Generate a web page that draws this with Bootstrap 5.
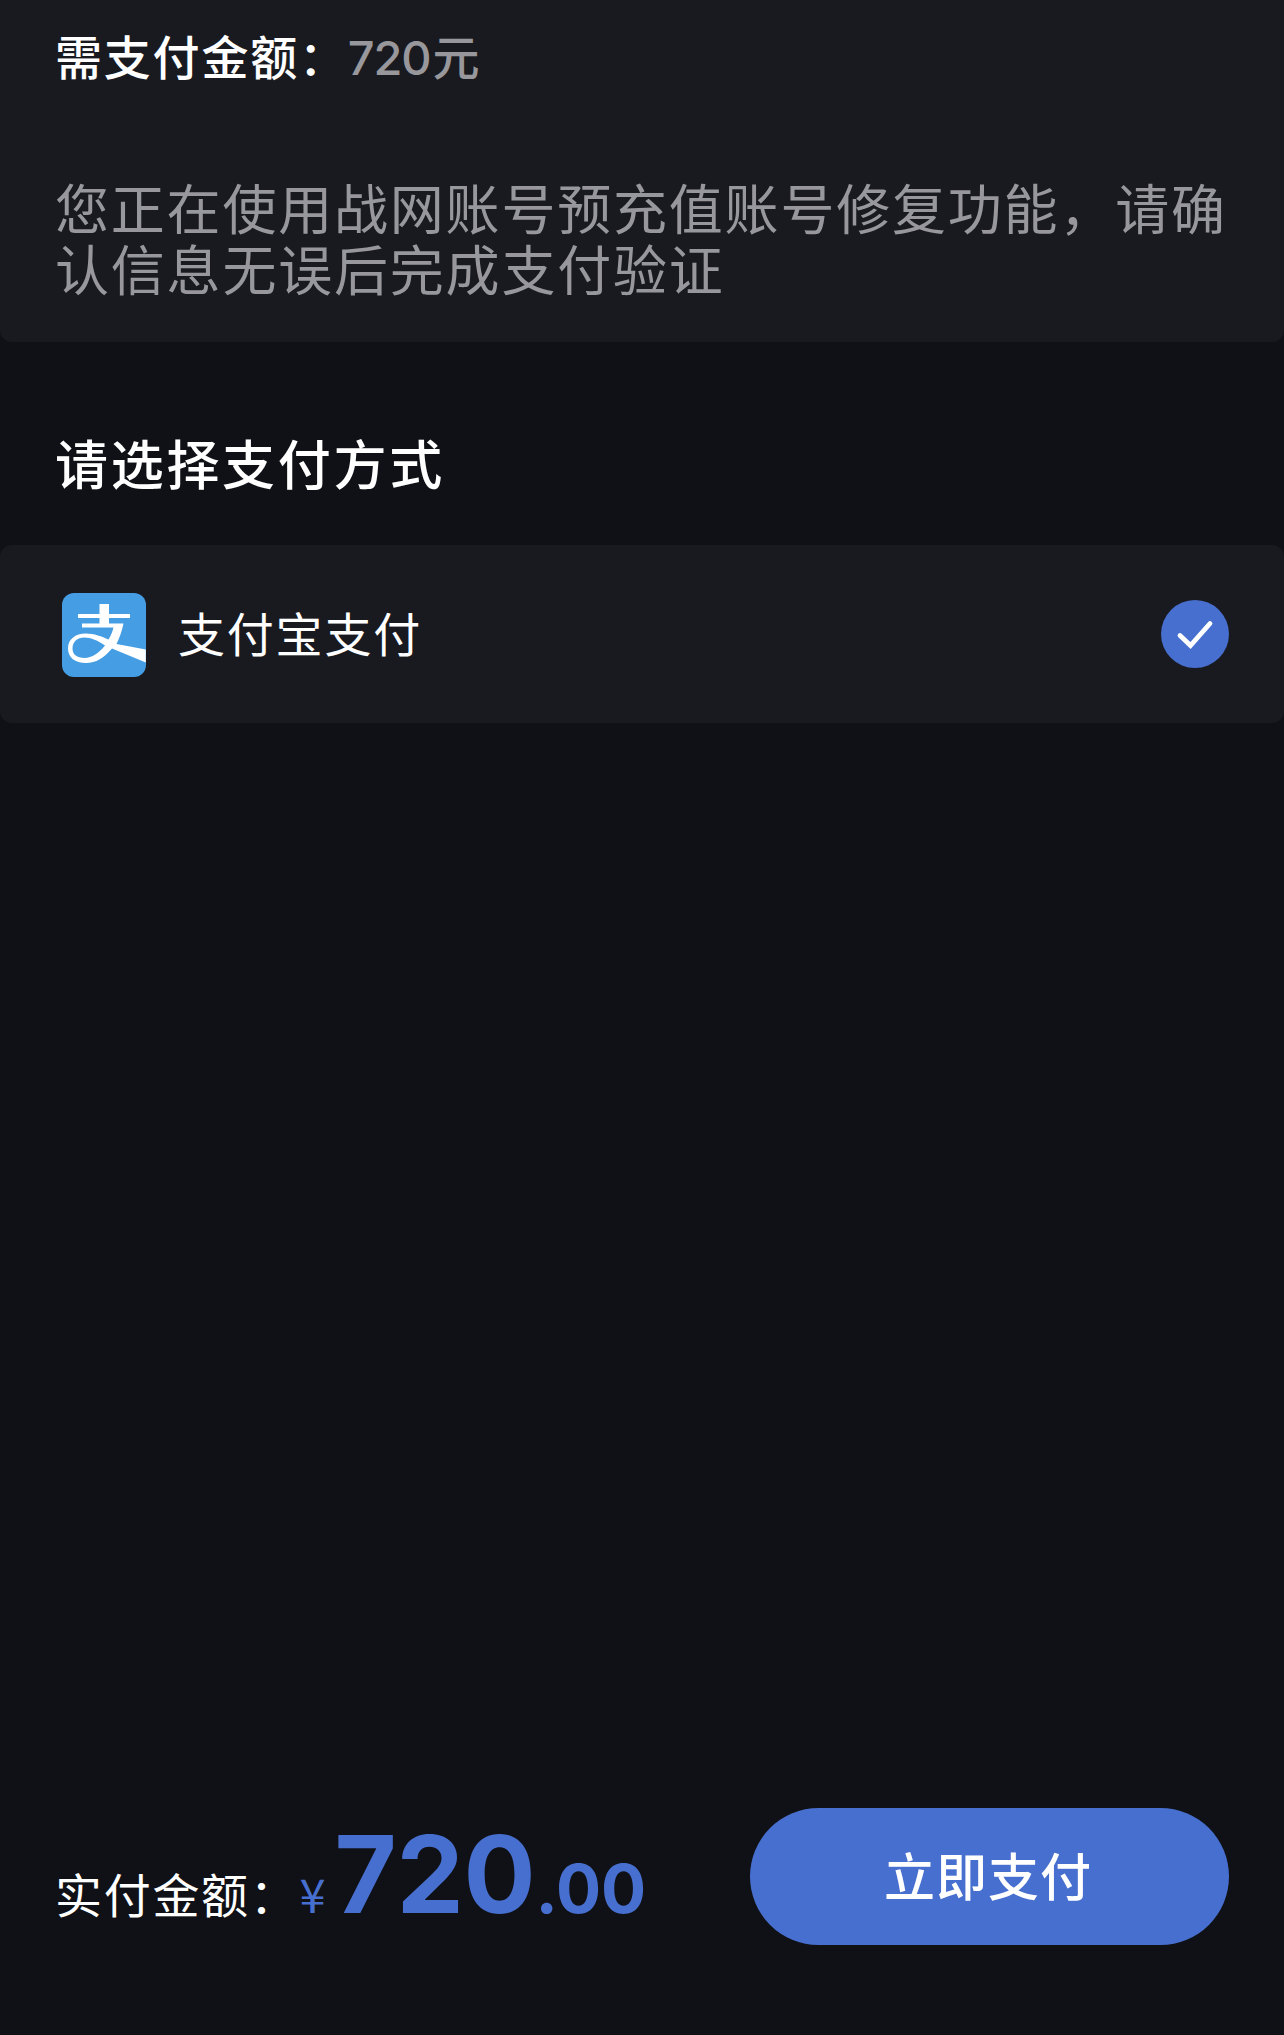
<!DOCTYPE html>
<html lang="zh-CN">
<head>
  <meta charset="UTF-8" />
  <meta name="viewport" content="width=device-width, initial-scale=1.0"/>
  <title>支付验证</title>
  <link href="https://cdn.jsdelivr.net/npm/bootstrap@5.3.0/dist/css/bootstrap.min.css" rel="stylesheet"/>
  <style>
    body {
      background: #101116;
      color: #fff;
      font-family: "Noto Sans CJK SC", sans-serif;
    }
    .pay-page { height: 2035px; overflow: hidden; }
    .panel { background: #191a1f; padding: 0 55px; }
    .order-info { height: 342px; padding-top: 25px; border-radius: 0 0 12px 12px; }
    .amount-row { font-size: 47px; line-height: 60px; letter-spacing: 1.8px; font-weight: 500; }
    .amount-value { color: #97979c; }
    .digits { font-family: "Inter", sans-serif; }
    .amount-value .digits { letter-spacing: -1.2px; margin-right: 2px; }
    .tip { margin-top: 89px; font-size: 54px; line-height: 60.5px; letter-spacing: 1.8px; color: #97979c; width: 1190px; }
    .method-title { font-size: 53px; line-height: 70px; letter-spacing: 2.7px; font-weight: 500; padding: 85px 55px 48px; }
    .method { height: 178px; border-radius: 12px; padding-left: 62px; }
    .method-icon { width: 84px; height: 84px; margin-top: 2px; }
    .method-name { font-size: 47px; line-height: 60px; letter-spacing: 1.8px; margin-left: 32px; padding-bottom: 5px; }
    .method-check { width: 68px; height: 68px; }
    .pay-bar { padding: 0 55px 90px; }
    .total { height: 137px; padding-top: 13px; }
    .total-label { font-size: 47px; letter-spacing: 1.7px; }
    .price { color: #476fcf; font-weight: 700; }
    .price-sign { font-size: 47px; font-weight: 400; margin-left: 1px; }
    .price-int { font-size: 107px; letter-spacing: -.3px; line-height: 1; margin-left: 9px; }
    .price-dec { font-size: 67px; line-height: 1; }
    .btn-pay, .btn-pay:hover {
      width: 479px;
      height: 137px;
      background: #476fcf;
      color: #fff;
      font-size: 51px;
      font-weight: 500;
      letter-spacing: 1px;
      line-height: 60px;
      padding: 0 3px 5px 0;
      border: 0;
    }
  </style>
</head>
<body>
  <div class="pay-page d-flex flex-column">
    <section class="panel order-info">
      <div class="amount-row d-flex">
        <span>需支付金额：</span>
        <span class="amount-value"><span class="digits">720</span>元</span>
      </div>
      <p class="tip mb-0">您正在使用战网账号预充值账号修复功能，请确认信息无误后完成支付验证</p>
    </section>

    <h2 class="method-title mb-0">请选择支付方式</h2>

    <!-- Payment methods -->
    <div class="panel method d-flex align-items-center">
      <svg class="method-icon" viewBox="0 0 84 84">
        <rect width="84" height="84" rx="12" fill="#459ee4"/>
        <g fill="#fff">
          <rect x="37.500" y="11" width="9.500" height="22"/>
          <rect x="16" y="21" width="52" height="4"/>
          <path d="M20 30.500H61.500C60 38 57.500 45 54.500 51L83.800 56.500V69.500L50 55.500C42 65 34 70 24 70C13 70 6 64.500 6 55.500C6 46.500 13 40.500 24 40.500C32 40.500 40 43.500 46.500 46.500C49 42.500 50.500 38.500 51.500 34.500H20ZM43 52.500C36 47.500 29 44.500 22.500 44.500C15 44.500 10.500 49 10.500 55.500C10.500 61.500 15 65 22.500 65C30 65 37 60 43 52.500Z" fill-rule="evenodd"/>
        </g>
      </svg>
      <span class="method-name">支付宝支付</span>
      <svg class="method-check ms-auto" viewBox="0 0 68 68">
        <circle cx="34" cy="34" r="34" fill="#476fcf"/>
        <path d="M19 35.500L29.500 45.500L49 23.500" fill="none" stroke="#fff" stroke-width="4.800" stroke-linecap="round"/>
      </svg>
    </div>

    <!-- Bottom bar -->
    <div class="pay-bar d-flex justify-content-between mt-auto">
      <div class="total d-flex align-items-baseline">
        <span class="total-label">实付金额：</span>
        <span class="price d-flex align-items-baseline">
          <span class="price-sign">¥</span>
          <span class="price-int digits">720</span>
          <span class="price-dec digits">.00</span>
        </span>
      </div>
      <button type="button" class="btn btn-pay rounded-pill">立即支付</button>
    </div>
  </div>

  <script src="https://cdn.jsdelivr.net/npm/bootstrap@5.3.0/dist/js/bootstrap.bundle.min.js"></script>
</body>
</html>
